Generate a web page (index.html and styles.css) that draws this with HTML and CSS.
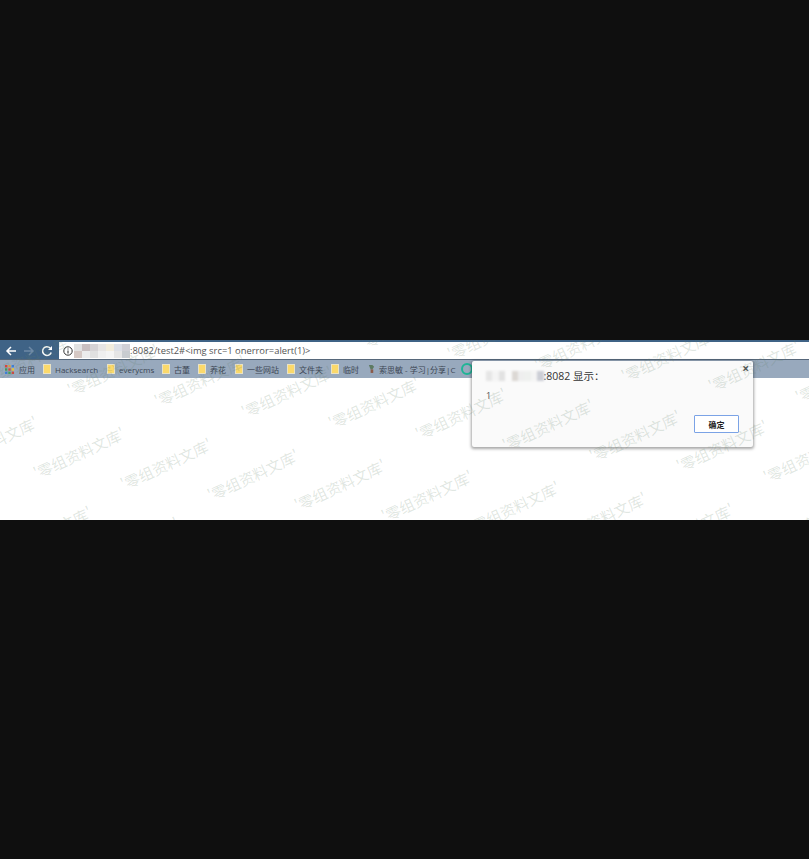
FILE: index.html
```html
<!DOCTYPE html>
<html lang="zh-CN">
<head>
  <meta charset="UTF-8">
  <title>alert</title>
  <link rel="stylesheet" href="styles.css">
</head>
<body>
  <div class="shot">
    <!-- 地址栏 -->
    <div class="toolbar">
      <div class="nav">
        <svg class="nav-icon" viewBox="0 0 12 12"><path d="M11 6H2M6 2 2 6l4 4" fill="none" stroke="#fff" stroke-width="1.5"/></svg>
        <svg class="nav-icon" viewBox="0 0 12 12"><path d="M1 6h9M6 2l4 4-4 4" fill="none" stroke="#6f8aa6" stroke-width="1.5"/></svg>
        <svg class="nav-icon" viewBox="0 0 12 12"><path d="M10.2 7.4A4.4 4.4 0 1 1 9.2 3" fill="none" stroke="#fff" stroke-width="1.5"/><path d="M11 1v4H7z" fill="#fff"/></svg>
      </div>
      <div class="url">
        <svg class="info" viewBox="0 0 10 10"><circle cx="5" cy="5" r="4.2" fill="none" stroke="#333" stroke-width="1"/><path d="M5 2.5v1M5 4.4V7.6" stroke="#333" stroke-width="1.1"/></svg>
        <div class="mosaic">
          <i style="background:#e2e2e2"></i><i style="background:#c9bfc0"></i><i style="background:#d6d3d5"></i><i style="background:#e7e5e4"></i><i style="background:#f2ecdc"></i><i style="background:#dcdfe6"></i><i style="background:#d0d0d6"></i>
          <i style="background:#d5c8c4"></i><i style="background:#ececec"></i><i style="background:#e0e0e0"></i><i style="background:#efefef"></i><i style="background:#f4f4f4"></i><i style="background:#e5e5e5"></i><i style="background:#c8ccd0"></i>
        </div>
        <span class="url-text">:8082/test2#&lt;img src=1 onerror=alert(1)&gt;</span>
      </div>
    </div>

    <!-- 书签栏 -->
    <div class="bookmarks">
      <div class="mark apps">
        <svg class="apps-icon" viewBox="0 0 9 9">
          <rect width="2.4" height="2.4" fill="#d9453d"/><rect x="3.3" width="2.4" height="2.4" fill="#e8a33a"/><rect x="6.6" width="2.4" height="2.4" fill="#3f7fd9"/>
          <rect y="3.3" width="2.4" height="2.4" fill="#3f9e5a"/><rect x="3.3" y="3.3" width="2.4" height="2.4" fill="#d9453d"/><rect x="6.6" y="3.3" width="2.4" height="2.4" fill="#e8c23a"/>
          <rect y="6.6" width="2.4" height="2.4" fill="#3f7fd9"/><rect x="3.3" y="6.6" width="2.4" height="2.4" fill="#3f9e5a"/><rect x="6.6" y="6.6" width="2.4" height="2.4" fill="#d9453d"/>
        </svg>
        <span>应用</span>
      </div>
      <div class="mark m-hack"><b class="folder"></b><span>Hacksearch</span></div>
      <div class="mark m-every"><b class="folder"></b><span>everycms</span></div>
      <div class="mark m-old"><b class="folder"></b><span>古董</span></div>
      <div class="mark m-flower"><b class="folder"></b><span>养花</span></div>
      <div class="mark m-site"><b class="folder"></b><span>一些网站</span></div>
      <div class="mark m-dir"><b class="folder"></b><span>文件夹</span></div>
      <div class="mark m-temp"><b class="folder"></b><span>临时</span></div>
      <div class="mark m-blog">
        <svg class="leaf" viewBox="0 0 8 11"><path d="M1 1h4l2 2-2 3H3z" fill="#5d7a62"/><path d="M3 6h3v4H3z" fill="#8a5a4a"/></svg>
        <span>索思敏 - 学习|分享|C</span>
      </div>
      <div class="ring"></div>
    </div>

    <div class="blank"></div>

    <!-- 弹窗 -->
    <div class="dialog">
      <span class="close">×</span>
      <div class="dialog-title">
        <div class="mosaic mosaic-title">
          <i style="background:#e6e6e6"></i><i style="background:#f4f4f4"></i><i style="background:#e2e2e2"></i><i style="background:#fafafa"></i><i style="background:#dcd8d4"></i><i style="background:#eeeeee"></i><i style="background:#eef0ee"></i><i style="background:#f4f4f4"></i><i style="background:#ccced6"></i>
        </div>
        <span>:8082 显示：</span>
      </div>
      <div class="dialog-msg">1</div>
      <div class="dialog-foot"><button class="ok">确定</button></div>
    </div>

    <!-- 水印 -->
    <svg class="watermark" width="809" height="180" viewBox="0 340 809 180">
      <defs><text id="wm" class="wm-text" text-anchor="middle" dominant-baseline="central" transform="rotate(-25)">'零组资料文库'</text></defs>
      <use href="#wm" x="319" y="312"/><use href="#wm" x="406" y="323"/><use href="#wm" x="493" y="334"/><use href="#wm" x="580" y="345"/><use href="#wm" x="667" y="356"/><use href="#wm" x="754" y="366"/><use href="#wm" x="841" y="377"/>
      <use href="#wm" x="26" y="360"/><use href="#wm" x="113" y="370"/><use href="#wm" x="200" y="381"/><use href="#wm" x="287" y="392"/><use href="#wm" x="374" y="403"/><use href="#wm" x="461" y="414"/><use href="#wm" x="548" y="425"/><use href="#wm" x="635" y="436"/><use href="#wm" x="722" y="446"/><use href="#wm" x="809" y="457"/>
      <use href="#wm" x="-8" y="442"/><use href="#wm" x="79" y="453"/><use href="#wm" x="166" y="464"/><use href="#wm" x="253" y="475"/><use href="#wm" x="340" y="485"/><use href="#wm" x="427" y="496"/><use href="#wm" x="514" y="507"/><use href="#wm" x="601" y="518"/><use href="#wm" x="688" y="529"/><use href="#wm" x="775" y="539"/>
      <use href="#wm" x="46" y="532"/><use href="#wm" x="133" y="543"/>
    </svg>
  </div>
</body>
</html>
```

FILE: styles.css
```css
body {
  margin: 0;
  height: 859px;
  overflow: hidden;
  background-color: #0f0f0f;
  font-family: "Open Sans", "Noto Sans CJK SC", sans-serif;
}
.shot {
  position: relative;
  display: flex;
  flex-direction: column;
  height: 180px;
  margin-top: 340px;
  overflow: hidden;
  background-color: #fff;
}

/* 地址栏 */
.toolbar {
  display: flex;
  align-items: flex-end;
  flex: none;
  height: 20px;
  box-sizing: border-box;
  background-color: #3f6386;
  border-bottom: 1px solid #56677a;
}
.nav {
  display: flex;
  align-items: center;
  gap: 6px;
  width: 59px;
  height: 17px;
  box-sizing: border-box;
  padding-left: 5px;
}
.nav-icon {
  width: 12px;
  height: 12px;
}
.url {
  display: flex;
  align-items: center;
  flex: 1;
  height: 17px;
  padding-left: 4px;
  background-color: #fff;
}
.info {
  width: 10px;
  height: 10px;
  margin-right: 1px;
}
.mosaic {
  display: grid;
  grid-template-columns: repeat(7, 8px);
  grid-auto-rows: 7px;
  filter: blur(0.7px);
}
.url-text {
  color: #555;
  font-size: 9.4px;
  white-space: nowrap;
}

/* 书签栏 */
.bookmarks {
  position: relative;
  flex: none;
  height: 18px;
  background-color: #98a9bd;
}
.mark {
  position: absolute;
  top: 0;
  display: flex;
  align-items: center;
  gap: 4px;
  height: 18px;
  color: #3c4654;
  font-size: 8px;
  white-space: nowrap;
}
.apps { left: 5px; gap: 5px; }
.m-hack { left: 43px; }
.m-every { left: 107px; }
.m-old { left: 162px; }
.m-flower { left: 198px; }
.m-site { left: 235px; }
.m-dir { left: 287px; }
.m-temp { left: 331px; }
.m-blog { left: 368px; }
.apps-icon {
  width: 9px;
  height: 9px;
}
.folder {
  width: 6px;
  height: 8px;
  background-color: #fbd96b;
  border: 1px solid #e9e2c4;
}
.leaf {
  width: 7px;
  height: 10px;
}
.ring {
  position: absolute;
  left: 461px;
  top: 3px;
  width: 8px;
  height: 8px;
  border: 2px solid #1fb596;
  border-radius: 50%;
}
.blank {
  flex: 1;
}

/* 弹窗 */
.dialog {
  position: absolute;
  left: 472px;
  top: 21px;
  box-sizing: border-box;
  width: 281px;
  height: 86px;
  padding: 8px 14px 0;
  background-color: #fafafa;
  border-radius: 2px;
  box-shadow: 0 1px 3px 1px rgba(0, 0, 0, 0.35);
}
.close {
  position: absolute;
  right: 4px;
  top: 1px;
  color: #555;
  font-size: 12px;
  font-weight: 700;
  line-height: 14px;
}
.dialog-title {
  display: flex;
  align-items: center;
  color: #333;
  font-size: 10.5px;
  line-height: 14px;
}
.mosaic-title {
  grid-template-columns: repeat(9, 6.4px);
  grid-auto-rows: 10px;
  filter: blur(0.8px);
}
.dialog-msg {
  margin-top: 7px;
  color: #555;
  font-size: 9px;
  line-height: 12px;
}
.dialog-foot {
  display: flex;
  justify-content: flex-end;
  margin-top: 13px;
}
.ok {
  width: 45px;
  height: 18px;
  padding: 0;
  background-color: #fff;
  border: 1px solid #7ba3e6;
  border-radius: 1px;
  color: #222;
  font-family: "Noto Sans CJK SC", sans-serif;
  font-size: 8px;
  font-weight: 700;
}

/* 水印 */
.watermark {
  position: absolute;
  left: 0;
  top: 0;
  pointer-events: none;
}
.wm-text {
  fill: #5f8068;
  fill-opacity: 0.2;
  font-family: "Noto Sans CJK SC", sans-serif;
  font-size: 15px;
  font-weight: 400;
}
```
